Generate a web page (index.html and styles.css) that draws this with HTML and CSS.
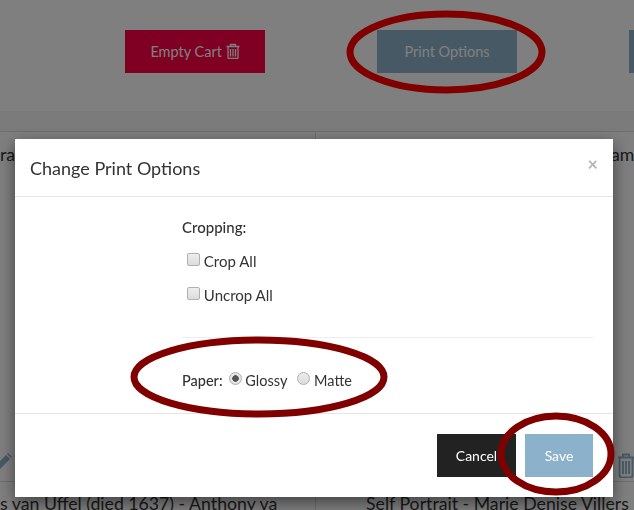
FILE: index.html
```html
<!DOCTYPE html>
<html lang="en">
<head>
    <meta charset="UTF-8">
    <title>Change Print Options</title>
    <link rel="stylesheet" href="styles.css">
</head>
<body>

    <div class="page">
        <div class="toolbar">
            <button class="btn btn-danger">Empty Cart
                <svg class="icon-trash" viewBox="0 0 14 16" width="14" height="16"><path d="M4.5 3V1.5h5V3M0.5 3.5h13M2 3.5v11a1 1 0 0 0 1 1h8a1 1 0 0 0 1-1v-11M4.5 6v7.5M7 6v7.5M9.5 6v7.5" fill="none" stroke="currentColor" stroke-width="1.3"/></svg>
            </button>
            <button class="btn btn-info">Print Options</button>
            <button class="btn btn-info"></button>
        </div>
        <div class="strip"></div>
        <div class="items">
            <div class="item item-left">
                <p>ra</p>
                <svg class="icon-pencil" viewBox="0 0 18 18" width="18" height="18"><path d="M0 18l1.5-5.5L12 2l4 4L5.5 16.5zM13 1l1-1 4 4-1 1z" fill="currentColor"/></svg>
            </div>
            <div class="item item-right">
                <p>ame</p>
                <svg class="icon-trash-big" viewBox="0 0 16 25" width="16" height="25"><path d="M5 4V1.5h6V4M0 4.5h16M1.5 4.5v18a2 2 0 0 0 2 2h9a2 2 0 0 0 2-2v-18M5 8v13M8 8v13M11 8v13" fill="none" stroke="currentColor" stroke-width="1.8"/></svg>
            </div>
            <p class="name name-left">s van Uffel (died 1637) - Anthony va</p>
            <p class="name name-right">Self Portrait - Marie Denise Villers</p>
        </div>
    </div>

    <div class="backdrop"></div>

    <div class="modal">
        <div class="modal-header">
            <h4>Change Print Options</h4>
            <span class="close">&times;</span>
        </div>
        <div class="modal-body">
            <p class="form-label">Cropping:</p>
            <label class="check"><input type="checkbox"> Crop All</label>
            <label class="check"><input type="checkbox"> Uncrop All</label>
            <hr>
            <div class="paper">
                <span class="form-label">Paper:</span>
                <label><input type="radio" name="paper" checked> Glossy</label>
                <label><input type="radio" name="paper"> Matte</label>
            </div>
        </div>
        <div class="modal-footer">
            <button class="btn btn-dark">Cancel</button>
            <button class="btn btn-save">Save</button>
        </div>
    </div>

    <!-- hand drawn marks on top of the screenshot -->
    <svg class="marks" width="634" height="510">
        <ellipse cx="446" cy="52" rx="96" ry="38"/>
        <ellipse cx="259" cy="377" rx="125" ry="37"/>
        <ellipse cx="556" cy="454" rx="55" ry="38"/>
    </svg>

</body>
</html>
```

FILE: styles.css
```css
* {
    box-sizing: border-box;
    margin: 0;
    padding: 0;
}

html, body {
    height: 100%;
    overflow: hidden;
}

body {
    font-family: Lato, "Open Sans", sans-serif;
    font-size: 15px;
    color: #333333;
    background-color: #ffffff;
}

.btn {
    border: none;
    height: 43px;
    flex-shrink: 0;
    font-family: inherit;
    font-size: 14px;
    color: #ffffff;
}

.btn-danger {
    background-color: #ff0044;
    width: 140px;
}

.btn-info {
    background-color: #8cb2cb;
    width: 140px;
}

.btn-dark {
    background-color: #222222;
    width: 79px;
}

.btn-save {
    background-color: #8cb2cb;
    width: 68px;
}

.toolbar {
    display: flex;
    gap: 112px;
    height: 111px;
    padding: 30px 0 0 125px;
    overflow: hidden;
}

.toolbar .btn {
    font-size: 14.5px;
    white-space: nowrap;
}

.icon-trash {
    vertical-align: -2px;
}

.strip {
    height: 21px;
    background-color: #f6f6f6;
    border-bottom: 1px solid #dddddd;
}

.items {
    display: grid;
    grid-template-columns: 316px 318px;
    grid-template-rows: 349px 29px;
    font-size: 17.7px;
    white-space: nowrap;
}

.item {
    display: flex;
    flex-direction: column;
    justify-content: space-between;
    padding-top: 12px;
    overflow: hidden;
}

.item-left, .name-left {
    border-right: 1px solid #dddddd;
}

.item-right {
    padding-left: 295px;
}

.icon-pencil {
    color: #8cb2cb;
    margin: 0 0 10px -6px;
}

.icon-trash-big {
    color: #8cb2cb;
    margin: 0 0 3px 7px;
}

.name {
    border-top: 1px solid #dddddd;
    padding-top: 11px;
    overflow: hidden;
}

.name-right {
    padding-left: 50px;
}

.backdrop {
    position: fixed;
    top: 0;
    left: 0;
    right: 0;
    bottom: 0;
    background-color: rgba(0, 0, 0, 0.5);
}

.modal {
    position: fixed;
    top: 139px;
    left: 15px;
    width: 598px;
    height: 358px;
    background-color: #ffffff;
    box-shadow: 0 5px 15px rgba(0, 0, 0, 0.5);
    display: flex;
    flex-direction: column;
}

.modal-header {
    height: 58px;
    padding: 0 15px;
    border-bottom: 1px solid #e5e5e5;
    display: flex;
    justify-content: space-between;
    align-items: center;
}

.modal-header h4 {
    font-size: 18px;
    font-weight: normal;
}

.close {
    font-size: 18px;
    font-weight: bold;
    color: #b5b5b5;
    margin: -8px 0 0 0;
}

.modal-body {
    height: 217px;
    padding: 21px 20px 0 167px;
    border-bottom: 1px solid #e5e5e5;
}

.form-label {
    font-weight: 500;
}

.check {
    display: block;
    margin: 16px 0 0 5px;
    height: 18px;
    line-height: 18px;
}

.modal-body input {
    appearance: none;
    width: 13px;
    height: 13px;
    border: 1px solid #b0b0b0;
    background: linear-gradient(#ededed, #dcdcdc);
    vertical-align: 1px;
}

input[type="checkbox"] {
    border-radius: 2px;
}

input[type="radio"] {
    border-radius: 50%;
}

input[type="radio"]:checked {
    background: radial-gradient(circle, #555555 0 3px, #e4e4e4 3.5px);
}

.modal-body hr {
    border: none;
    border-top: 1px solid #eeeeee;
    margin-top: 33px;
}

.paper {
    display: flex;
    gap: 10px;
    margin-top: 34px;
    font-size: 14.5px;
}

.paper .form-label {
    margin-right: -4px;
}

.modal-footer {
    display: flex;
    justify-content: flex-end;
    gap: 9px;
    padding: 20px 20px 0 0;
}

.marks {
    position: fixed;
    top: 0;
    left: 0;
}

.marks ellipse {
    fill: none;
    stroke: #800000;
    stroke-width: 7;
}
```
